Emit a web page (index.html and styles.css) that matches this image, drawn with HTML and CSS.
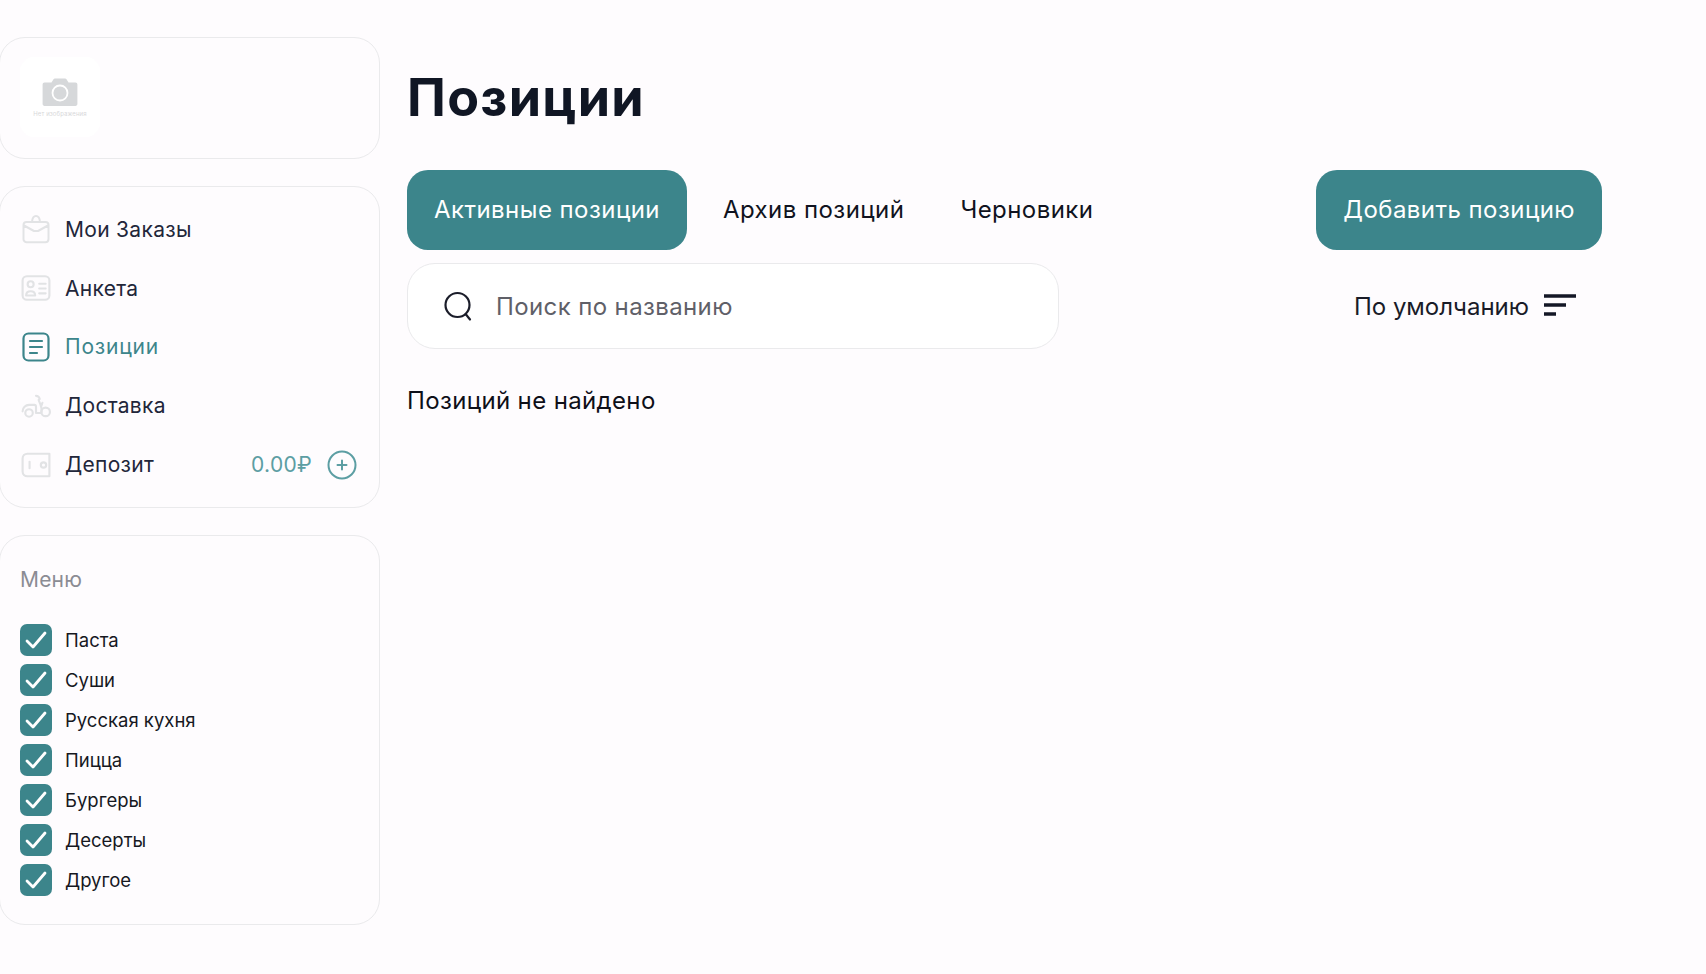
FILE: index.html
```html
<!DOCTYPE html>
<html lang="ru">
<head>
<meta charset="utf-8">
<title>Позиции</title>
<link rel="stylesheet" href="styles.css">
</head>
<body>
<div class="page">
  <aside class="sidebar">
    <section class="card logo-card">
      <div class="logo">
        <svg class="camera" viewBox="0 0 36 28"><path class="cam-body" d="M2.500 4.500h7l2-3.200c.3-.5.8-.8 1.400-.8h10.200c.6 0 1.100.3 1.400.8l2 3.200h7c1.100 0 1.900.8 1.900 1.900v19.700c0 1.100-.8 1.900-1.900 1.900h-31c-1.100 0-1.900-.8-1.900-1.900v-19.700c0-1.100.8-1.900 1.900-1.900z"/><circle class="cam-lens" cx="18" cy="15" r="7.500"/></svg>
        <span class="logo-text">Нет изображения</span>
      </div>
    </section>
    <nav class="card nav-card">
      <a class="nav-row">
        <svg class="nav-icon" viewBox="0 0 28 30"><path d="M1.500 11c0-1.700 1.200-3 3-3h19c1.800 0 3 1.300 3 3v14c0 1.900-1.300 3.200-3.200 3.200h-18.600c-1.900 0-3.200-1.300-3.200-3.200zM10 8c.3-3.800 1.800-6 4-6s3.700 2.200 4 6M2 11.500l10 5.500h4l10-5.500"/></svg>
        <span>Мои Заказы</span>
      </a>
      <a class="nav-row">
        <svg class="nav-icon" viewBox="0 0 28 28"><rect x="1.500" y="3" width="25" height="22" rx="4"/><circle cx="9" cy="10.500" r="2.800"/><path d="M4.800 21c0-2.600 1.400-4 4.200-4s4.200 1.400 4.200 4zM17 10h6M17 14.500h6M17 19h6"/></svg>
        <span>Анкета</span>
      </a>
      <a class="nav-row is-active">
        <svg class="nav-icon" viewBox="0 0 28 30"><rect x="1.500" y="1.500" width="25" height="27" rx="5"/><path d="M8 9h12M8 15h12M8 21h7"/></svg>
        <span>Позиции</span>
      </a>
      <a class="nav-row">
        <svg class="nav-icon" viewBox="0 0 28 24"><circle cx="7.500" cy="18.500" r="3.500"/><circle cx="23" cy="17.500" r="4"/><path d="M1.500 17c0-3.500 2.800-6 6-6h5c1 0 1.500.8 1.500 1.800v5.700h5c.5-3.500.5-5-2.500-12M14 2.500c1.500 0 2.800.5 3.500 3M20 9l-1 3"/></svg>
        <span>Доставка</span>
      </a>
      <a class="nav-row">
        <svg class="nav-icon" viewBox="0 0 28 24"><path d="M6 1.500h20.500v21h-20.500c-2.600 0-4.500-1.900-4.500-4.500v-12c0-2.600 1.900-4.500 4.500-4.500z"/><path d="M8 9v6"/><circle cx="21" cy="12" r="2.500"/></svg>
        <span>Депозит</span>
        <span class="deposit-sum">0.00₽</span>
        <svg class="plus" viewBox="0 0 30 30"><circle cx="15" cy="15" r="13.500"/><path d="M15 10.500v9M10.500 15h9"/></svg>
      </a>
    </nav>
    <section class="card menu-card">
      <h2 class="menu-title">Меню</h2>
      <ul class="menu-list">
        <li class="menu-item"><span class="check"><svg viewBox="0 0 32 32"><path d="M7 17l6 6L25 9"/></svg></span>Паста</li>
        <li class="menu-item"><span class="check"><svg viewBox="0 0 32 32"><path d="M7 17l6 6L25 9"/></svg></span>Суши</li>
        <li class="menu-item"><span class="check"><svg viewBox="0 0 32 32"><path d="M7 17l6 6L25 9"/></svg></span>Русская кухня</li>
        <li class="menu-item"><span class="check"><svg viewBox="0 0 32 32"><path d="M7 17l6 6L25 9"/></svg></span>Пицца</li>
        <li class="menu-item"><span class="check"><svg viewBox="0 0 32 32"><path d="M7 17l6 6L25 9"/></svg></span>Бургеры</li>
        <li class="menu-item"><span class="check"><svg viewBox="0 0 32 32"><path d="M7 17l6 6L25 9"/></svg></span>Десерты</li>
        <li class="menu-item"><span class="check"><svg viewBox="0 0 32 32"><path d="M7 17l6 6L25 9"/></svg></span>Другое</li>
      </ul>
    </section>
  </aside>
  <main class="main">
    <h1 class="title">Позиции</h1>
    <div class="tabs-row">
      <button class="tab is-active">Активные позиции</button>
      <button class="tab">Архив позиций</button>
      <button class="tab">Черновики</button>
      <button class="add-btn">Добавить позицию</button>
    </div>
    <div class="search-row">
      <div class="search">
        <svg class="search-icon" viewBox="0 0 30 32"><circle cx="14.500" cy="15" r="12"/><path d="M23 24.500l4 5"/></svg>
        <span class="search-text">Поиск по названию</span>
      </div>
      <div class="sort">
        <span>По умолчанию</span>
        <svg class="sort-icon" viewBox="0 0 32 22"><path d="M0 2h32M0 11h22M0 20h12"/></svg>
      </div>
    </div>
    <p class="empty">Позиций не найдено</p>
  </main>
</div>
</body>
</html>
```
FILE: styles.css
```css
* { box-sizing: border-box; }
html, body { margin: 0; height: 100%; }
body {
  background: #fefcfe;
  color: #15192a;
  font-family: "Inter", "Noto Sans", sans-serif;
  overflow: hidden;
}
.page { display: flex; padding-top: 37px; }
.sidebar {
  width: 381px;
  margin-left: -1px;
  margin-right: 27px;
  display: flex;
  flex-direction: column;
  gap: 27px;
  flex-shrink: 0;
}
.card {
  background: #fefcfe;
  border: 1.500px solid #eaeaec;
  border-radius: 26px;
}
.logo-card { height: 122px; padding: 19px 20px; }
.logo {
  width: 80px;
  height: 80px;
  background: #fff;
  border-radius: 14px;
  display: flex;
  flex-direction: column;
  align-items: center;
  padding-top: 21px;
}
.camera { width: 36px; height: 28px; }
.cam-body { fill: #d6d8da; }
.cam-lens { fill: #d6d8da; stroke: #fff; stroke-width: 1.800; }
.logo-text { font-size: 6px; letter-spacing: .1px; color: #d8d8da; margin-top: 4px; white-space: nowrap; }

.nav-card {
  height: 322px;
  padding: 13px 22px 13px 21px;
  display: flex;
  flex-direction: column;
}
.nav-row {
  height: 59px;
  display: flex;
  align-items: center;
  font-size: 21px;
  letter-spacing: .3px;
  color: #22263a;
}
.nav-icon {
  width: 30px;
  height: 30px;
  flex-shrink: 0;
  margin-right: 14px;
  fill: none;
  stroke: #e2e3e5;
  stroke-width: 2;
  stroke-linecap: round;
  stroke-linejoin: round;
}
.nav-row.is-active { color: #3c858b; letter-spacing: .8px; }
.nav-row.is-active .nav-icon { stroke: #3c858b; stroke-width: 2.200; }
.deposit-sum { margin-left: auto; color: #5c9ea3; }
.plus {
  width: 30px;
  height: 30px;
  margin-left: 15px;
  fill: none;
  stroke: #5c9ea3;
  stroke-width: 2;
  stroke-linecap: round;
}
.menu-card { height: 390px; padding: 31px 20px; }
.menu-title { margin: 0 0 31px; font-size: 21px; font-weight: 400; letter-spacing: .2px; color: #8b8c94; line-height: 26px; }
.menu-list { margin: 0; padding: 0; list-style: none; display: flex; flex-direction: column; gap: 8px; }
.menu-item { display: flex; align-items: center; font-size: 18.500px; color: #16181f; height: 32px; }
.check {
  width: 32px;
  height: 32px;
  background: #3c858b;
  border-radius: 7px;
  margin-right: 13px;
  flex-shrink: 0;
}
.check svg { display: block; fill: none; stroke: #fff; stroke-width: 2.800; stroke-linecap: round; stroke-linejoin: round; }

.main { width: 1195px; display: flex; flex-direction: column; }
.title { margin: 31px 0 0; font-size: 52px; letter-spacing: 1.300px; line-height: 60px; font-weight: 700; color: #101624; height: 102px; }
.tabs-row { display: flex; align-items: center; height: 80px; }
button { font: inherit; border: 0; background: none; cursor: pointer; }
.tab { height: 80px; padding: 0 28px 2px; font-size: 24px; letter-spacing: .45px; color: #101320; white-space: nowrap; }
.tab.is-active { background: #3c858b; color: #fff; border-radius: 21px; padding: 0 27px 2px; margin-right: 8px; }
.add-btn {
  margin-left: auto;
  height: 80px;
  padding: 0 27px 2px;
  background: #3c858b;
  color: #fff;
  border-radius: 21px;
  font-size: 24px;
  letter-spacing: .45px;
  white-space: nowrap;
}
.search-row { display: flex; align-items: center; margin-top: 13px; }
.search {
  width: 652px;
  height: 86px;
  background: #fff;
  border: 1.500px solid #eaeaec;
  border-radius: 28px;
  display: flex;
  align-items: center;
  padding-left: 35px;
}
.search-icon { width: 30px; height: 32px; fill: none; stroke: #1b1d2a; stroke-width: 2.200; stroke-linecap: round; margin-right: 23px; flex-shrink: 0; }
.search-text { font-size: 24px; letter-spacing: .38px; color: #5f6068; }
.sort { margin-left: auto; display: flex; align-items: center; font-size: 24px; color: #191b28; margin-right: 26px; }
.sort-icon { width: 32px; height: 22px; margin-left: 15px; margin-bottom: 2px; fill: none; stroke: #141726; stroke-width: 3.500; }
.empty { margin: 37px 0 0; font-size: 24px; letter-spacing: .36px; line-height: 30px; color: #0e0f18; }
```
